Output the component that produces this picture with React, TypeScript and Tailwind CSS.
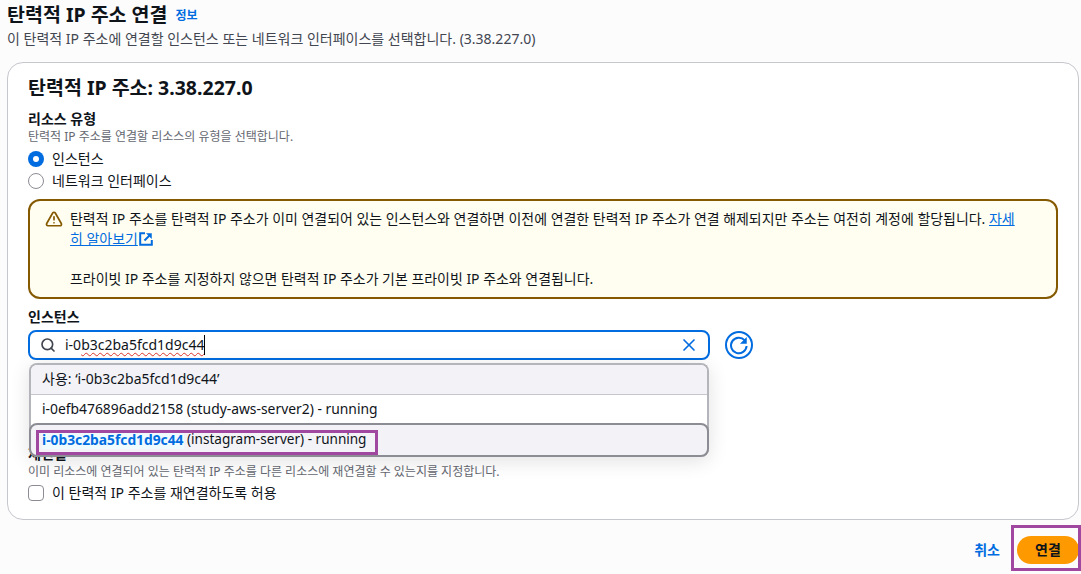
import { Search, TriangleAlert, X } from 'lucide-react'

const font = '[font-family:"Noto_Sans","Noto_Sans_CJK_KR",sans-serif]'

function Radio({ checked, label }: { checked?: boolean; label: string }) {
  return (
    <label className="flex h-[22px] items-center gap-2">
      {checked ? (
        <span className="flex h-4 w-4 items-center justify-center rounded-full bg-[#006ce0]">
          <span className="h-[6px] w-[6px] rounded-full bg-white" />
        </span>
      ) : (
        <span className="h-4 w-4 rounded-full border border-[#8c8c94] bg-white" />
      )}
      <span className="text-sm text-[#0f141a]">{label}</span>
    </label>
  )
}

function ExternalIcon() {
  return (
    <svg viewBox="0 0 14 14" className="ml-px inline h-[14px] w-[14px] align-[-2px] text-[#006ce0]" fill="none" stroke="currentColor">
      <path d="M6 1.2H1.2v11.6h11.6V8" strokeWidth="2" />
      <path d="M5.5 8.5 11 3" strokeWidth="2" />
      <path d="M7.5 1.5h5v5z" fill="currentColor" strokeWidth="0.5" />
    </svg>
  )
}

function RefreshIcon() {
  return (
    <svg viewBox="0 0 28 28" className="h-7 w-7 text-[#006ce0]" fill="none" stroke="currentColor">
      <circle cx="14" cy="14" r="13" strokeWidth="2" />
      <path d="M19.6 9.2A7.8 7.8 0 1 0 21.6 15" strokeWidth="2" />
      <path d="M21.5 6.5v6h-6z" fill="currentColor" strokeWidth="0.5" />
    </svg>
  )
}

export default function App() {
  return (
    <div className={`relative h-[574px] w-[1081px] overflow-hidden bg-[#fcfcfd] px-[7px] text-[#0f141a] ${font}`}>
      {/* Page header */}
      <div className="flex h-[30px] items-center gap-[8px]">
        <h1 className="text-[19.5px] font-bold leading-[22px]">탄력적 IP 주소 연결</h1>
        <a className="mt-px text-[12px] font-bold leading-[22px] text-[#006ce0]">정보</a>
      </div>
      <p className="h-[20px] text-sm leading-[18px] text-[#424650]">
        이 탄력적 IP 주소에 연결할 인스턴스 또는 네트워크 인터페이스를 선택합니다. (3.38.227.0)
      </p>

      {/* Main card */}
      <div className="mt-[12px] h-[458px] w-[1072px] rounded-2xl border border-[#c6c6cd] bg-white px-5 pt-[13px]">
        <h2 className="text-[19.5px] font-bold leading-6">탄력적 IP 주소: 3.38.227.0</h2>

        <div className="mt-[9px] text-sm font-bold leading-[20px]">리소스 유형</div>
        <p className="text-[12px] leading-[16px] text-[#656871]">탄력적 IP 주소를 연결할 리소스의 유형을 선택합니다.</p>
        <div className="mt-[3px]">
          <Radio checked label="인스턴스" />
          <Radio label="네트워크 인터페이스" />
        </div>

        {/* Warning alert */}
        <div className="mt-[7px] flex h-[100px] w-[1030px] gap-[7px] rounded-xl border-2 border-[#855900] bg-[#fffef0] pl-[15px] pr-9 pt-[8px]">
          <TriangleAlert className="mt-px h-[18px] w-[18px] shrink-0 text-[#855900]" strokeWidth={2.25} />
          <div className="text-[13.96px] leading-[20px] text-[#0f141a]">
            <p>
              탄력적 IP 주소를 탄력적 IP 주소가 이미 연결되어 있는 인스턴스와 연결하면 이전에 연결한 탄력적 IP 주소가 연결 해제되지만 주소는 여전히 계정에 할당됩니다.{' '}
              <a className="text-[#006ce0] underline">자세히 알아보기</a>
              <ExternalIcon />
            </p>
            <p className="mt-[20px]">프라이빗 IP 주소를 지정하지 않으면 탄력적 IP 주소가 기본 프라이빗 IP 주소와 연결됩니다.</p>
          </div>
        </div>

        {/* Instance field */}
        <div className="mt-[8px] text-sm font-bold leading-[20px]">인스턴스</div>
        <div className="relative mt-[3px] flex items-center gap-[15px]">
          <div className="flex h-[30px] w-[682px] items-center rounded-lg border-2 border-[#006ce0] bg-white pl-[10px] pr-[9px]">
            <Search className="h-4 w-4 shrink-0 text-[#424650]" strokeWidth={2.5} />
            <span className="relative ml-[9px] text-sm leading-5">
              i-0<span className="underline decoration-[#e0352b] decoration-wavy decoration-1 underline-offset-2">b3c2ba5fcd1d9c44</span>
              <span className="absolute -right-px top-0 h-5 w-px bg-black" />
            </span>
            <X className="ml-auto h-[20px] w-[20px] text-[#006ce0]" strokeWidth={2} />
          </div>
          <button className="flex h-[28px] w-[28px] items-center justify-center">
            <RefreshIcon />
          </button>

          {/* Autosuggest dropdown */}
          <div className="absolute left-px top-[33px] z-10 w-[680px] rounded-lg border-2 border-b-0 border-[#b4b4bb] bg-white text-sm shadow-[0_4px_20px_rgba(0,7,22,0.12)]">
            <div className="flex h-[30px] items-center rounded-t-md border-b border-[#c6c6cd] bg-[#f3f3f7] pb-[2px] pl-[11px]">사용: ‘i-0b3c2ba5fcd1d9c44’</div>
            <div className="flex h-[28px] items-center pl-[11px] text-[13.87px]">i-0efb476896add2158 (study-aws-server2) - running</div>
            <div className="-mx-[2px] flex h-[34px] items-center rounded-lg border-2 border-[#8c8c94] bg-[#f3f3f7] pb-px pl-[11px]">
              <span className="bg-[#f0fbff] text-[13.8px] font-bold text-[#006ce0]">i-0b3c2ba5fcd1d9c44</span>
              <span className="text-[13.55px]">&nbsp;(instagram-server) - running</span>
            </div>
          </div>
          <div className="absolute left-[8px] top-[100px] z-20 h-[25px] w-[342px] border-[3px] border-[#a0479f]" />
        </div>

        {/* Reassociation, label is covered by the dropdown */}
        <div className="mt-[84px] text-sm font-bold leading-[20px]">재연결</div>
        <p className="text-[12px] leading-[16px] text-[#656871]">이미 리소스에 연결되어 있는 탄력적 IP 주소를 다른 리소스에 재연결할 수 있는지를 지정합니다.</p>
        <label className="mt-[3px] flex h-[20px] items-center gap-2">
          <span className="h-4 w-4 rounded border border-[#8c8c94] bg-white" />
          <span className="text-sm">이 탄력적 IP 주소를 재연결하도록 허용</span>
        </label>
      </div>

      {/* Footer actions */}
      <div className="mt-[16px] flex h-[28px] w-[1072px] items-center justify-end gap-[17px]">
        <a className="text-sm font-bold text-[#006ce0]">취소</a>
        <button className="h-[28px] w-[62px] rounded-full bg-[#ff9900] text-sm font-bold text-[#0f141a]">연결</button>
      </div>
      <div className="absolute left-[1011px] top-[525px] h-[46px] w-[70px] border-[3px] border-[#a0479f]" />
    </div>
  )
}
